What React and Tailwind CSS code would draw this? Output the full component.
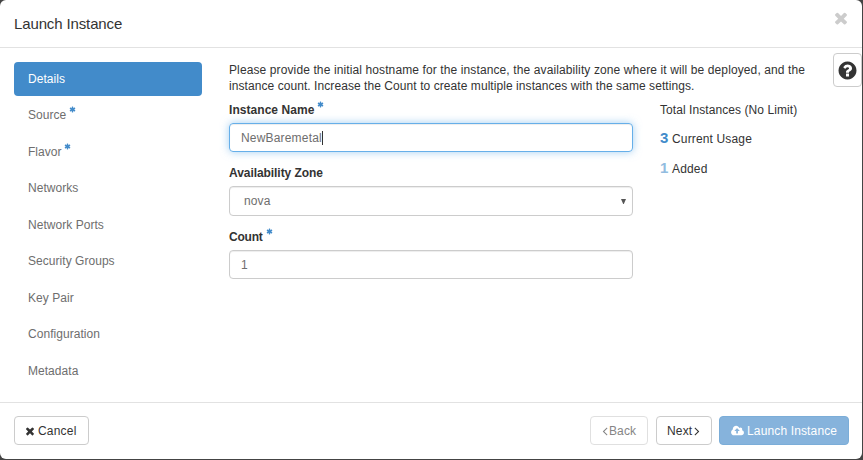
import React from "react";

const TIMES =
  "M1490 1322q0 40-28 68l-136 136q-28 28-68 28t-68-28l-294-294-294 294q-28 28-68 28t-68-28l-136-136q-28-28-28-68t28-68l294-294-294-294q-28-28-28-68t28-68l136-136q28-28 68-28t68 28l294 294 294-294q28-28 68-28t68 28l136 136q28 28 28 68t-28 68l-294 294 294 294q28 28 28 68z";
const QUESTION =
  "M1024 1376v-192q0-14-9-23t-23-9h-192q-14 0-23 9t-9 23v192q0 14 9 23t23 9h192q14 0 23-9t9-23zm256-672q0-88-55.5-163t-138.5-116-170-41q-243 0-371 213-15 24 8 42l132 100q7 6 19 6 16 0 25-12 53-68 86-92 34-24 86-24 48 0 85.5 26t37.5 59q0 38-20 61t-68 45q-63 28-115.5 86.5t-52.5 125.5v36q0 14 9 23t23 9h192q14 0 23-9t9-23q0-19 21.5-49.5t54.5-49.5q32-18 49-28.5t46-35 44.5-48 28-60.5 12.5-81zm384 192q0 209-103 385.5t-279.5 279.5-385.5 103-385.5-103-279.5-279.5-103-385.5 103-385.5 279.5-279.5 385.5-103 385.5 103 279.5 279.5 103 385.5z";
const CLOUD =
  "M1216 864q0-14-9-23l-352-352q-9-9-23-9t-23 9l-351 351q-10 12-10 24 0 14 9 23t23 9h224v352q0 13 9.5 22.5t22.5 9.5h192q13 0 22.5-9.5t9.5-22.5v-352h224q13 0 22.5-9.5t9.5-22.5zm640 288q0 159-112.5 271.5t-271.5 112.5h-1088q-185 0-316.5-131.5t-131.5-316.5q0-130 70-240t188-165q-2-30-2-43 0-212 150-362t362-150q156 0 285.5 87t188.5 231q71-62 166-62 106 0 181 75t75 181q0 76-41 138 130 31 213.5 135.5t83.5 238.5z";
const ASTERISK =
  "M1546 1050q46 26 59.5 77.5t-12.5 97.5l-64 110q-26 46-77.5 59.5t-97.5-12.5l-266-153v307q0 52-38 90t-90 38h-128q-52 0-90-38t-38-90v-307l-266 153q-46 26-97.5 12.5t-77.5-59.5l-64-110q-26-46-12.5-97.5t59.5-77.5l266-154-266-154q-46-26-59.5-77.5t12.5-97.5l64-110q26-46 77.5-59.5t97.5 12.5l266 153v-307q0-52 38-90t90-38h128q52 0 90 38t38 90v307l266-153q46-26 97.5-12.5t77.5 59.5l64 110q26 46 12.5 97.5t-59.5 77.5l-266 154z";
const ANGLE_LEFT =
  "M1203 544q0 13-10 23l-393 393 393 393q10 10 10 23t-10 23l-50 50q-10 10-23 10t-23-10l-466-466q-10-10-10-23t10-23l466-466q10-10 23-10t23 10l50 50q10 10 10 23z";
const ANGLE_RIGHT =
  "M1171 960q0 13-10 23l-466 466q-10 10-23 10t-23-10l-50-50q-10-10-10-23t10-23l393-393-393-393q-10-10-10-23t10-23l50-50q10-10 23-10t23 10l466 466q10 10 10 23z";

function Icon({ d, viewBox = "0 0 1792 1792", className }) {
  return (
    <svg viewBox={viewBox} className={`shrink-0 ${className}`} fill="currentColor" aria-hidden="true">
      <path d={d} />
    </svg>
  );
}

function Required() {
  return <Icon d={ASTERISK} className="mb-[11px] ml-0.5 size-[7px] text-[#428bca]" />;
}

const steps = [
  { label: "Details", active: true },
  { label: "Source", required: true },
  { label: "Flavor", required: true },
  { label: "Networks" },
  { label: "Network Ports" },
  { label: "Security Groups" },
  { label: "Key Pair" },
  { label: "Configuration" },
  { label: "Metadata" },
];

function Label({ children, required }) {
  return (
    <label className="flex h-4 items-center font-bold">
      <span className={required ? "mr-px" : ""}>{children}</span>
      {required && <Required />}
    </label>
  );
}

export default function App() {
  return (
    <div className="h-[460px] w-[863px] overflow-hidden bg-[#444] font-['Liberation_Sans',Arial,sans-serif] text-xs text-[#333]">
      <div className="flex h-[459px] w-[862px] flex-col rounded-md bg-white">
        <header className="flex h-12 shrink-0 items-center justify-between border-b border-[#e2e2e2] pr-3.5 pl-3.5">
          <h1 className="text-[15px] leading-5 tracking-[-0.13px]">Launch Instance</h1>
          <button className="mb-[11px] text-[#ccc]">
            <Icon d={TIMES} className="-mr-0.5 size-[18px]" />
          </button>
        </header>

        <main className="flex h-[354px] shrink-0">
          <nav className="mt-[13.6px] ml-3.5 flex w-[188px] shrink-0 flex-col gap-0.5 tracking-[0.04px]">
            {steps.map((s) => (
              <a
                key={s.label}
                className={`flex h-[34.5px] shrink-0 items-center rounded px-3.5 ${
                  s.active ? "bg-[#428bca] text-white" : "text-[#6e6e6e]"
                }`}
              >
                <span className="mr-[0.6px]">{s.label}</span>
                {s.required && <Required />}
              </a>
            ))}
          </nav>

          <section className="mt-3.5 ml-[27px] w-[604px] shrink-0">
            <p className="leading-4 whitespace-nowrap">
              <span className="tracking-[0.113px]">
                Please provide the initial hostname for the instance, the availability zone where it will be deployed, and the
              </span>
              <br />
              <span className="tracking-[0.067px]">
                instance count. Increase the Count to create multiple instances with the same settings.
              </span>
            </p>
            <div className="mt-2 flex">
              <form className="w-[404px] shrink-0">
                <div className="tracking-[0.05px]">
                  <Label required>Instance Name</Label>
                </div>
                <div className="mt-[5px] flex h-[29px] items-center rounded border border-[#66afe9] px-[11px] tracking-[0.18px] text-[#6e6e6e] shadow-[inset_0_1px_1px_rgba(0,0,0,0.075),0_0_8px_rgba(102,175,233,0.6)]">
                  NewBaremetal
                  <span className="h-3.5 w-px bg-[#333]" />
                </div>
                <div className="mt-[13px] tracking-[-0.06px]">
                  <Label>Availability Zone</Label>
                </div>
                <div className="mt-[5px] flex h-[30px] items-center justify-between rounded border border-[#ccc] pr-1.5 pl-3.5 tracking-[0.1px] text-[#6e6e6e] shadow-[inset_0_1px_1px_rgba(0,0,0,0.075)]">
                  nova
                  <svg viewBox="0 0 5 5" className="h-[5px] w-[5px]" fill="#555" aria-hidden="true">
                    <path d="M0 0h5L2.8 5h-.6z" />
                  </svg>
                </div>
                <div className="mt-[13px] tracking-[-0.2px]">
                  <Label required>Count</Label>
                </div>
                <div className="mt-[5px] flex h-[29px] items-center rounded border border-[#ccc] px-[11px] text-[#6e6e6e] shadow-[inset_0_1px_1px_rgba(0,0,0,0.075)]">
                  1
                </div>
              </form>
              <aside className="ml-[27px] flex flex-col tracking-[0.15px]">
                <div className="h-4 leading-4 tracking-[0.07px]">Total Instances (No Limit)</div>
                <div className="mt-[11px] flex h-[18px] items-baseline gap-[3.5px] leading-[18px]">
                  <b className="text-[15px] text-[#428bca]">3</b>Current Usage
                </div>
                <div className="mt-3 flex h-[18px] items-baseline gap-[3.5px] leading-[18px]">
                  <b className="text-[15px] text-[#92bce0]">1</b>Added
                </div>
              </aside>
            </div>
          </section>

          <button className="mt-[5px] flex h-[34px] w-[29px] shrink-0 items-center justify-center rounded border border-[#ccc]">
            <Icon d={QUESTION} className="size-[21px]" />
          </button>
        </main>

        <footer className="flex h-[57px] shrink-0 items-center border-t border-[#e2e2e2] pr-[13px] pb-0.5 pl-3.5">
          <button className="flex h-[29px] w-[75px] items-center rounded border border-[#ccc] pt-px pl-[9px] tracking-[0.2px]">
            <Icon d={TIMES} className="mr-0.5 size-3" />
            Cancel
          </button>
          <button className="ml-auto flex h-[29px] w-[58px] items-center rounded border border-[#e0e0e0] pt-px pl-[10.5px] tracking-[0.1px] text-[#858585]">
            <Icon d={ANGLE_LEFT} viewBox="512 0 768 1792" className="mr-[1.5px] h-3.5 w-1.5" />
            Back
          </button>
          <button className="ml-2 flex h-[29px] w-14 items-center rounded border border-[#ccc] pt-px pl-2.5 tracking-[0.15px]">
            Next
            <Icon d={ANGLE_RIGHT} viewBox="512 0 768 1792" className="ml-0.5 h-3.5 w-1.5" />
          </button>
          <button className="ml-[7px] flex h-[29px] w-[130px] items-center rounded border border-[#7badd8] bg-[#86b3dc] pt-px pl-[11px] tracking-[0.14px] text-white">
            <Icon d={CLOUD} viewBox="-64 0 1920 1792" className="mr-[3px] h-3 w-[13px]" />
            Launch Instance
          </button>
        </footer>
      </div>
    </div>
  );
}
